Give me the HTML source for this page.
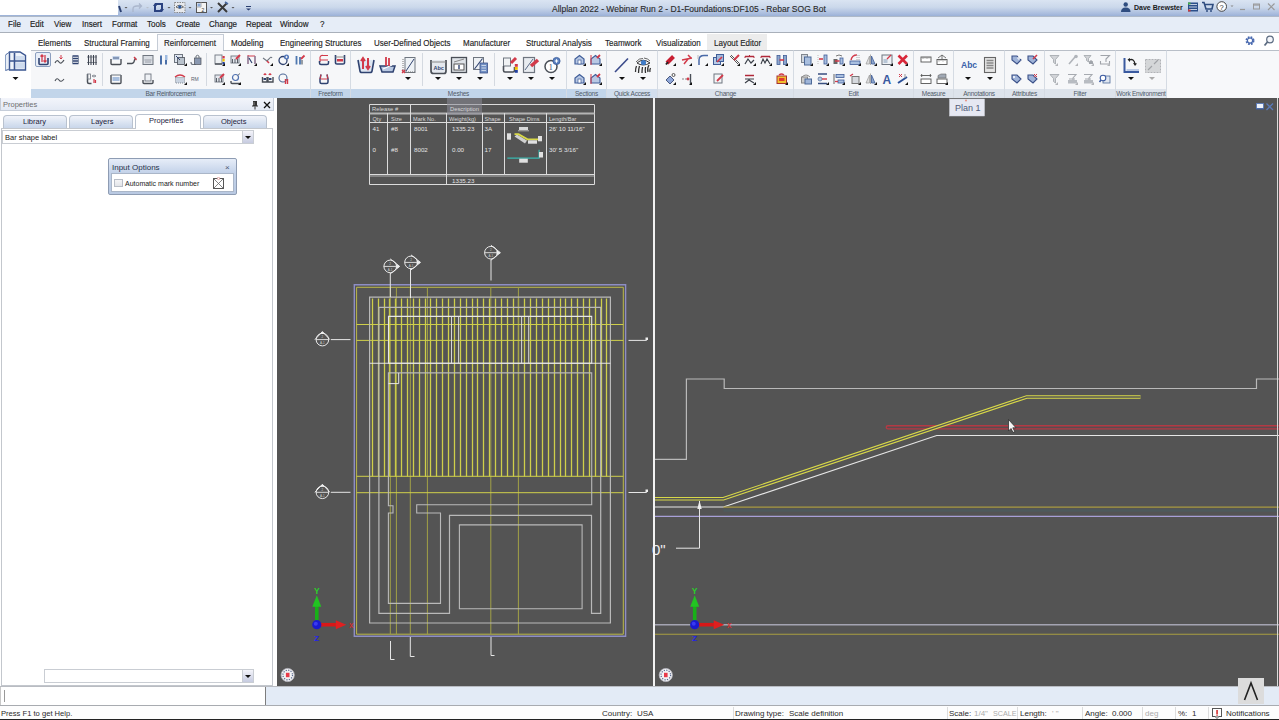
<!DOCTYPE html>
<html><head><meta charset="utf-8">
<style>
*{box-sizing:border-box}
html,body{margin:0;padding:0}
body{width:1279px;height:720px;overflow:hidden;position:relative;background:#fff;font-family:"Liberation Sans",sans-serif;color:#1e1e1e}
.a{position:absolute}
.t{position:absolute;white-space:nowrap;line-height:1}
#title{left:0;top:0;width:1279px;height:16px;background:linear-gradient(#dae4f2 0%,#cbd8eb 45%,#aabdde 85%,#9bb1d7 100%)}
#menu{left:0;top:16px;width:1279px;height:17px;background:#e6edf7;border-top:1px solid #aeb9c8;border-bottom:1px solid #a9b0ba}
#menu .t{top:4px;font-size:8px;color:#1c1c1c;-webkit-text-stroke:0.15px #1c1c1c;transform:scaleY(1.08);transform-origin:0 0}
#tabs{left:0;top:33px;width:1279px;height:17px;background:#fff}
#tabs .t{top:5.5px;font-size:8px;color:#222;transform:scaleY(1.12);transform-origin:0 0;-webkit-text-stroke:0.12px #222}
#ribbon{left:0;top:50px;width:1279px;height:48px;background:#fff}
.grp{position:absolute;top:0;height:47.5px;background:#f6f7f9;border-right:1px solid #d5dbe3;border-top:1px solid #b9bfc8}
.glab{position:absolute;left:0;right:0;bottom:0;height:9px;background:#c2d5ea;font-size:6.5px;letter-spacing:-0.25px;color:#505a68;text-align:center;line-height:9.5px;white-space:nowrap}
#left{left:0;top:98px;width:277px;height:588px;background:#fff}
#vp1{left:277px;top:98px;width:376px;height:588px;background:#545454}
#sep{left:653px;top:98px;width:2px;height:588px;background:#f2f2f2}
#vp2{left:655px;top:98px;width:624px;height:588px;background:#545454}
#cmd{left:0;top:686px;width:1279px;height:20px;background:#fff;border-top:1px solid #b9bcc2;border-bottom:1px solid #a8abb0}
#status{left:0;top:706px;width:1279px;height:13px;background:#fdfdfd}
#status .t{top:3.5px;font-size:8px;color:#2a2a2a}
</style></head>
<body>
<!-- TITLE BAR -->
<div id="title" class="a">
  <div class="a" style="left:0;top:0;width:118px;height:15px;background:#fff"></div>
  <div class="t" style="left:552px;top:5px;font-size:8.5px;color:#2a2a2a;-webkit-text-stroke:0.12px #2a2a2a">Allplan 2022 - Webinar Run 2 - D1-Foundations:DF105 - Rebar SOG Bot</div>
  <div class="t" style="left:1134px;top:4px;font-size:7.8px;color:#1a1a1a;font-weight:bold;transform:scaleX(0.9);transform-origin:0 0">Dave Brewster</div>
</div>
<svg class="a" style="left:0;top:0" width="1279" height="16" viewBox="0 0 1279 16" fill="none">
<path d="M119 6 L121 12" stroke="#2a3f70" stroke-width="2"/>
<polygon points="124.5,7 127.5,7 126,8.5" fill="#555"/>
<path d="M133 12 V9 Q133 6 137 6 H141 M139 3.5 L141.5 6 L139 8.5" stroke="#aab6cc" stroke-width="1.3"/>
<polygon points="146,7 149,7 147.5,8.5" fill="#b8c0cc"/>
<path d="M155 6 V11 H162 M162 9 V4 H155" stroke="#2a4280" stroke-width="2"/><polygon points="153,6 157,6 155,3" fill="#2a4280"/><polygon points="160,9 164,9 162,12" fill="#2a4280"/>
<polygon points="167.5,7 170.5,7 169,8.5" fill="#555"/>
<rect x="174.5" y="2.5" width="10.5" height="10" fill="#e8eaee" stroke="#888" stroke-dasharray="1.5 1"/><path d="M176 7 Q179.5 3.5 183.5 7 Q179.5 10 176 7Z" fill="#fff" stroke="#333" stroke-width="0.7"/><circle cx="179.8" cy="6.8" r="1.6" fill="#2c5aa0"/>
<polygon points="188.5,7 191.5,7 190,8.5" fill="#555"/>
<rect x="196.5" y="2.5" width="10" height="10" fill="#f4f4f4" stroke="#555"/><path d="M196.5 7 H201 V2.5" stroke="#aaa"/><rect x="197.5" y="3.5" width="3" height="3" fill="#88a8d8"/><text x="201.5" y="11.5" font-size="5" fill="#333" font-family="Liberation Sans">2</text>
<polygon points="210,7 213,7 211.5,8.5" fill="#555"/>
<path d="M218 3 L227 12 M227 3 L218 12" stroke="#3a3a3a" stroke-width="2"/><path d="M225 2 L228 4" stroke="#4a6aa0" stroke-width="1.6"/>
<polygon points="231.5,7 234.5,7 233,8.5" fill="#555"/>
<path d="M246 6.5 H251" stroke="#2a3f70" stroke-width="1"/><polygon points="246,8.5 251,8.5 248.5,10.5" fill="#2a3f70"/>
<!-- right side -->
<circle cx="1125.7" cy="4.5" r="2.2" fill="#2f4d80"/><path d="M1121 12 Q1121 7.5 1125.7 7.5 Q1130.5 7.5 1130.5 12 Z" fill="#2f4d80"/>
<rect x="1188" y="2.5" width="10" height="9" fill="#2b4f8a"/><path d="M1189 4.5 H1197 M1189 7 H1197 M1189 9.5 H1197" stroke="#e8eef8" stroke-width="0.8"/><rect x="1188" y="2.5" width="2.5" height="2" fill="#4ab04a"/><rect x="1188" y="9.5" width="2.5" height="2" fill="#c83a3a"/>
<path d="M1202 2.5 H1204 L1206 9 H1212 L1213 4.5 H1205" stroke="#2f4d80" stroke-width="1.6"/><circle cx="1207" cy="11" r="1" fill="#2f4d80"/><circle cx="1211" cy="11" r="1" fill="#2f4d80"/>
<circle cx="1221.7" cy="6.5" r="4.8" fill="#fff" stroke="#333" stroke-width="0.9"/><text x="1219.4" y="9.5" font-size="7.5" fill="#333" font-family="Liberation Sans">?</text>
<polygon points="1230.5,5.5 1233.5,5.5 1232,7" fill="#888"/>
<path d="M1240 9.5 H1245" stroke="#999" stroke-width="1.2"/>
<rect x="1253.5" y="4" width="6" height="5" stroke="#999" stroke-width="1"/><path d="M1253.5 5 H1259.5" stroke="#999" stroke-width="1.2"/>
<path d="M1268 3.5 L1274.5 10 M1274.5 3.5 L1268 10" stroke="#999" stroke-width="1.1"/>
</svg>
<!-- MENU -->
<div id="menu" class="a">
  <div class="t" style="left:8px">File</div>
  <div class="t" style="left:30px">Edit</div>
  <div class="t" style="left:54px">View</div>
  <div class="t" style="left:82px">Insert</div>
  <div class="t" style="left:112px">Format</div>
  <div class="t" style="left:147px">Tools</div>
  <div class="t" style="left:176px">Create</div>
  <div class="t" style="left:209px">Change</div>
  <div class="t" style="left:246px">Repeat</div>
  <div class="t" style="left:280px">Window</div>
  <div class="t" style="left:320px">?</div>
</div>
<!-- TABS -->
<div id="tabs" class="a">
  <div class="a" style="left:157px;top:1px;width:67px;height:17px;background:linear-gradient(#fbfbfd,#f5f6f9);border:1px solid #c5ccd6;border-bottom:none"></div>
  <div class="a" style="left:707px;top:1px;width:60px;height:16px;background:#ececec"></div>
  <div class="t" style="left:38px">Elements</div>
  <div class="t" style="left:84px">Structural Framing</div>
  <div class="t" style="left:164px">Reinforcement</div>
  <div class="t" style="left:231px">Modeling</div>
  <div class="t" style="left:280px">Engineering Structures</div>
  <div class="t" style="left:374px">User-Defined Objects</div>
  <div class="t" style="left:463px">Manufacturer</div>
  <div class="t" style="left:526px">Structural Analysis</div>
  <div class="t" style="left:605px">Teamwork</div>
  <div class="t" style="left:656px">Visualization</div>
  <div class="t" style="left:714px">Layout Editor</div>
</div>
<svg class="a" style="left:1240px;top:33px" width="39" height="17" viewBox="1240 33 39 17" fill="none">
<circle cx="1250" cy="40.6" r="3.4" stroke="#4a6ab0" stroke-width="2.2" stroke-dasharray="1.6 1.1"/><circle cx="1250" cy="40.6" r="2.6" stroke="#4a6ab0" stroke-width="1.2"/><circle cx="1250" cy="40.6" r="1" fill="#fff"/>
<circle cx="1270" cy="39.5" r="3.3" stroke="#5a6a80" stroke-width="1.2" fill="#f4f6fa"/><path d="M1267.5 42 L1264.5 45.5" stroke="#5a6a80" stroke-width="1.8"/>
</svg>
<!-- RIBBON -->
<div id="ribbon" class="a">
  <div class="grp" style="left:0;width:31px;background:#fff;border-right:none;border-top:none"></div>
  <div class="grp" style="left:31px;width:280px"><div class="glab">Bar Reinforcement</div></div>
  <div class="grp" style="left:311px;width:40px"><div class="glab">Freeform</div></div>
  <div class="grp" style="left:351px;width:216px"><div class="glab">Meshes</div></div>
  <div class="grp" style="left:567px;width:40px"><div class="glab">Sections</div></div>
  <div class="grp" style="left:607px;width:51px"><div class="glab" style="background:#d2deed">Quick Access</div></div>
  <div class="grp" style="left:658px;width:136px"><div class="glab" style="background:#dce3ec">Change</div></div>
  <div class="grp" style="left:794px;width:120px"><div class="glab" style="background:#dde3eb">Edit</div></div>
  <div class="grp" style="left:914px;width:40px"><div class="glab" style="background:#dde3eb">Measure</div></div>
  <div class="grp" style="left:954px;width:51px"><div class="glab" style="background:#dde3eb">Annotations</div></div>
  <div class="grp" style="left:1005px;width:40px"><div class="glab" style="background:#dde3eb">Attributes</div></div>
  <div class="grp" style="left:1045px;width:71px"><div class="glab" style="background:#dde3eb">Filter</div></div>
  <div class="grp" style="left:1116px;width:51px"><div class="glab" style="background:#dde3eb">Work Environment</div></div>
  <div class="grp" style="left:1167px;width:112px;background:#f7f8fa;border-right:none"></div>
</div>
<div id="tabcover" class="a" style="left:158px;top:50px;width:65px;height:1px;background:#f6f7f9"></div>
<!--ICONS--><svg class="a" style="left:0;top:0" width="1279" height="98" viewBox="0 0 1279 98" fill="none"><path d="M102.5 53 V86" stroke="#d4d9e0" stroke-width="1"/>
<path d="M206.5 53 V86" stroke="#d4d9e0" stroke-width="1"/>
<path d="M422.5 53 V86" stroke="#d4d9e0" stroke-width="1"/>
<path d="M494.5 53 V86" stroke="#d4d9e0" stroke-width="1"/>
<g><path d="M5.5 55 L9.5 52 V69 L5.5 70.5 Z" fill="#e8eef6" stroke="#8aa0c4" stroke-width="1"/><path d="M9.5 52 H20 L25.5 55.5 V70 H9.5 Z" fill="#eef3fa" stroke="#3a5590" stroke-width="1.4"/><path d="M9.5 61 H25.5 M14.5 53 V70" stroke="#3a5590" stroke-width="1.6"/><path d="M9.5 52 L5.5 55 M9.5 69 L5.5 70.5" stroke="#6a82b0" stroke-width="1"/><rect x="16" y="56" width="8" height="4" fill="#cfdcee"/><rect x="16" y="62.5" width="8" height="6" fill="#cfdcee"/></g>
<polygon points="12.5,77.0 18.5,77.0 15.5,80.0" fill="#111"/>
<rect x="35.5" y="52.5" width="15" height="14" rx="1.5" fill="#e8eef8" stroke="#8c9fbf" stroke-width="1"/>
<g transform="translate(37.5,54)"><path d="M1.5 4 V9.5 Q1.5 10.5 2.5 10.5 H9.5 Q10.5 10.5 10.5 9.5 V4" fill="none" stroke="#2f4270" stroke-width="1.6"/><path d="M4.5 8 V1 M3 2.5 L4.5 1 L6 2.5 M7.5 1 V8 M6 6.5 L7.5 8 L9 6.5" fill="none" stroke="#d23a4a" stroke-width="1.3"/></g>
<g transform="translate(54,54)"><path d="M1 9 Q3 5 5 8 T10 6" fill="none" stroke="#4a4f57" stroke-width="1.2"/><path d="M7 1 V5 M5.5 3.5 L7 5 L8.5 3.5" fill="none" stroke="#d23a4a" stroke-width="1"/></g>
<g transform="translate(70,54)"><path d="M2.5 2 H8.5 M2.5 4.5 H8.5 M2.5 7 H8.5 M2.5 9.5 H8.5" stroke="#2f4270" stroke-width="1.5"/><path d="M2.5 2 V9.5 M8.5 2 V9.5" stroke="#7d8aa0" stroke-width="0.9"/></g>
<g transform="translate(86,54)"><path d="M1 3 H11 M1 8.5 H11" stroke="#6f7680" stroke-width="0.8"/><path d="M2.5 1 V11 M5 1 V11 M7.5 1 V11 M10 1 V11" stroke="#3d4350" stroke-width="1.1"/></g>
<g transform="translate(54,73)"><path d="M1 8 Q3 4 5 7 T10 6" fill="none" stroke="#4a4f57" stroke-width="1.1"/></g>
<g transform="translate(86,73)"><path d="M1.5 1 V9 Q1.5 10.5 3 10.5 H5.5" fill="none" stroke="#4a4f57" stroke-width="1.5"/><rect x="1.5" y="1" width="3" height="5" fill="none" stroke="#6f7680" stroke-width="0.8"/><path d="M6 3 Q8 1 10 3 Q8 5 6 3" fill="none" stroke="#6f7680" stroke-width="0.8"/><path d="M8 6 V10 M9.5 7 V10" stroke="#d23a4a" stroke-width="1.2"/></g>
<g transform="translate(110,54)"><path d="M1 5 V9.5 Q1 10.5 2 10.5 H10 Q11 10.5 11 9.5 V5" fill="none" stroke="#4a4f57" stroke-width="1.4"/><rect x="2.5" y="2" width="7" height="4" fill="#a8bfdf" opacity="0.7"/><path d="M3 4 H9" stroke="#2f4270" stroke-width="0.8"/></g>
<g transform="translate(126,54)"><path d="M1 9.5 H6 Q8 9.5 8.5 6 L10 4" fill="none" stroke="#4a4f57" stroke-width="1.4"/><path d="M8 3 L10.5 6" stroke="#d23a4a" stroke-width="1.3"/></g>
<g transform="translate(142,54)"><rect x="1" y="1.5" width="10" height="9" fill="#d9dde3" stroke="#6f7680" stroke-width="1"/><path d="M2.5 6 H9.5 M3 8 H9" stroke="#8a9099" stroke-width="0.8"/></g>
<g transform="translate(158,54)"><path d="M3 1.5 V10.5 M8 1.5 V10.5" stroke="#4a6fa8" stroke-width="2"/><rect x="7" y="1" width="2.5" height="5" fill="#9fbbe0"/></g>
<g transform="translate(174,54)"><rect x="0.5" y="0.5" width="8" height="8" fill="#dfe6f0" stroke="#6f7680"/><rect x="3.5" y="3.5" width="7" height="7" fill="#b9c2cc" stroke="#4a4f57" stroke-width="0.8"/><path d="M2 2 L6 6" stroke="#2f4270"/></g>
<g transform="translate(190,54)"><path d="M1 8 Q1 10.5 3 10.5 H6" fill="none" stroke="#6f7680" stroke-width="1.2"/><rect x="4.5" y="4" width="6.5" height="6.5" fill="#8a98b0" stroke="#4a4f57" stroke-width="0.7"/><path d="M6 4 V2 Q7.5 0.5 9 2 V4" fill="none" stroke="#6f7680"/></g>
<g transform="translate(110,73)"><path d="M1 2 V9.5 Q1 10.5 2 10.5 H10 Q11 10.5 11 9.5 V2" fill="none" stroke="#4a4f57" stroke-width="1.4"/><path d="M1 2 H11" stroke="#6f7680"/><rect x="2.5" y="4" width="7" height="4" fill="#a8bfdf"/></g>
<g transform="translate(142,73)"><path d="M1 7 V9.5 Q1 10.5 2 10.5 H10 Q11 10.5 11 9.5 V7" fill="none" stroke="#4a4f57" stroke-width="1.4"/><rect x="3" y="1" width="6" height="7" fill="#eef1f5" stroke="#6f7680" stroke-width="0.9"/></g>
<g transform="translate(174,73)"><path d="M1 4 Q6 0 11 4" fill="none" stroke="#d23a4a" stroke-width="1.3"/><rect x="1.5" y="4.5" width="9" height="5.5" fill="#c9d3e0" stroke="#6f7680" stroke-width="0.8" stroke-dasharray="1 1"/></g>
<g transform="translate(190,73)"><text x="1" y="8" font-size="5" fill="#5a6070" font-family="Liberation Sans">RM</text></g>
<g transform="translate(214,54)"><rect x="1" y="1" width="7" height="9" fill="#eef1f4" stroke="#6f7680" stroke-width="0.9"/><path d="M1 10 H8" stroke="#4a4f57" stroke-width="1.4"/><rect x="8.5" y="2" width="2.2" height="2.5" fill="#d23a4a"/><rect x="8.5" y="5" width="2.2" height="2.5" fill="#f2c200"/><rect x="8.5" y="8" width="2.2" height="2.5" fill="#2240a0"/></g>
<g transform="translate(230,54)"><rect x="1" y="2" width="8" height="7" fill="#e4e8ee" stroke="#6f7680" stroke-width="0.9"/><path d="M2.5 5 V9 M5 5 V9 M7.5 5 V9" stroke="#4a4f57" stroke-width="0.9"/><path d="M6 5 L10 1" stroke="#d23a4a" stroke-width="2"/></g>
<g transform="translate(246,54)"><path d="M2 1 V10 M2 2 H9 M9 2 V10" stroke="#d23a4a" stroke-width="1"/><path d="M2 2 V10 M9 2 V10" stroke="#7a8aa8" stroke-width="1.2"/><path d="M3 4 L6 9" stroke="#2f4270" stroke-width="1.2"/></g>
<g transform="translate(262,54)"><path d="M1 4 L5 7 L7 5 Q9 2 10 4" fill="none" stroke="#6f7680" stroke-width="1.1"/><path d="M5 7 L7 9" stroke="#d23a4a" stroke-width="1.6"/></g>
<g transform="translate(278,54)"><circle cx="5" cy="6.5" r="4" fill="none" stroke="#2f4270" stroke-width="1.3"/><circle cx="8.5" cy="3" r="2.5" fill="#4f74b8"/><path d="M7.3 3 H9.7 M8.5 1.8 V4.2" stroke="#fff" stroke-width="0.8"/></g>
<g transform="translate(294,54)"><path d="M2.5 2 V10.5 M6 3 V10.5" stroke="#4f78b0" stroke-width="1.8"/><path d="M7 5 L10.5 1.5" stroke="#d23a4a" stroke-width="1.8"/><path d="M8 6 V10.5" stroke="#6f7680" stroke-width="1.4"/></g>
<g transform="translate(214,73)"><rect x="1" y="2" width="8" height="7" fill="#e4e8ee" stroke="#6f7680" stroke-width="0.9"/><path d="M2.5 5 V9 M5 5 V9 M7.5 5 V9" stroke="#4a4f57" stroke-width="0.9"/><path d="M6 5 L10 1" stroke="#d23a4a" stroke-width="2"/></g>
<g transform="translate(230,73)"><path d="M1 8 V9.5 Q1 10.5 2 10.5 H10" fill="none" stroke="#4a4f57" stroke-width="1.4"/><circle cx="5.5" cy="4.5" r="3" fill="none" stroke="#4f70b0" stroke-width="1.2"/><path d="M7.5 2.5 L10 0.5" stroke="#6f7680"/></g>
<g transform="translate(262,73)"><path d="M0.5 4 V9 H5 V4 M6 4 V9 H11 V4" fill="none" stroke="#4a4f57" stroke-width="1.4"/><rect x="1.5" y="5" width="2.5" height="2" fill="#2f4270"/><rect x="7" y="5" width="2.5" height="2" fill="#2f4270"/><path d="M2 2 Q3 0 4 2 M7 2 Q8 0 9 2" fill="none" stroke="#d23a4a" stroke-width="1.5"/></g>
<g transform="translate(278,73)"><circle cx="5" cy="5" r="4" fill="none" stroke="#4f6a98" stroke-width="1.1"/><path d="M7.5 6 V11 M9.5 6 V11" stroke="#d23a4a" stroke-width="1.4"/></g>
<g transform="translate(318,54)"><path d="M2 3 Q3 1 5 1.5 H10 M2 3 V8 M2 6 H10" fill="none" stroke="#d23a4a" stroke-width="1.1"/><path d="M1.5 7 V9 Q1.5 10.5 3 10.5 H9 Q10.5 10.5 10.5 9 V7" fill="none" stroke="#2f4270" stroke-width="1.5"/></g>
<g transform="translate(334,54)"><path d="M1.5 1 V9 Q1.5 10 3 10 H9 Q10.5 10 10.5 9 V1" fill="none" stroke="#2f4270" stroke-width="1.6"/><rect x="3" y="5" width="6" height="2.5" fill="#d23a4a"/><path d="M1.5 3 H10.5" stroke="#888"/></g>
<g transform="translate(318,73)"><path d="M3 1.5 L2 6 V9 Q2 10.5 3.5 10.5 H8.5 Q10 10.5 10 9 V6 L9 1.5" fill="none" stroke="#2f4270" stroke-width="1.5"/><path d="M3 1.5 L2 6 M9 1.5 L10 6 M3 6 H9" stroke="#d23a4a" stroke-width="1"/></g>
<g transform="translate(574,54)"><path d="M1 10 V5 L5.5 1.5 L10 5 V10 Z" fill="#b8c8e4" stroke="#3f5d98" stroke-width="1.2"/><rect x="4" y="6" width="3" height="4" fill="#fff" stroke="#3f5d98" stroke-width="0.7"/></g>
<g transform="translate(590,54)"><path d="M1 10 V5 L5.5 1.5 L10 5 V10 Z" fill="#b8c8e4" stroke="#3f5d98" stroke-width="1.1"/><path d="M1 1 V11" stroke="#d23a4a" stroke-width="1"/><path d="M7 4 L10 1" stroke="#d23a4a" stroke-width="1.8"/></g>
<g transform="translate(574,73)"><path d="M1 10 V5 L5.5 1.5 L10 5 V10 Z" fill="#b8c8e4" stroke="#3f5d98" stroke-width="1.2"/><rect x="4" y="6" width="3" height="4" fill="#fff" stroke="#3f5d98" stroke-width="0.7"/></g>
<g transform="translate(590,73)"><path d="M1 10 V5 L5.5 1.5 L10 5 V10 Z" fill="#b8c8e4" stroke="#3f5d98" stroke-width="1.1"/><path d="M1 1 V11" stroke="#d23a4a" stroke-width="1"/><path d="M7 4 L10 1" stroke="#d23a4a" stroke-width="1.8"/></g>
<g transform="translate(665,54)"><path d="M2 9 L8.5 2.5" stroke="#c81e32" stroke-width="4"/><path d="M1 10.5 L3 8" stroke="#222" stroke-width="2"/></g>
<g transform="translate(681,54)"><path d="M1 6 L11 4 M3 10 L7 5 M7 1 L10 4" stroke="#d23a4a" stroke-width="1.5"/></g>
<g transform="translate(697,54)"><path d="M2 11 V6 Q2 1.5 7 1.5 H11" fill="none" stroke="#4a6aa8" stroke-width="1.5"/><path d="M1 1 V5" stroke="#bbb"/></g>
<g transform="translate(713,54)"><rect x="0.5" y="3.5" width="7" height="7" fill="#b9cce8" stroke="#3f5d98"/><rect x="3.5" y="0.5" width="7" height="7" fill="#9fb7dc" stroke="#3f5d98"/><path d="M4 8 L9 3" stroke="#d23a4a" stroke-width="1.6"/></g>
<g transform="translate(729,54)"><path d="M1 2 L9 10 M2 1 L10 9" stroke="#555" stroke-width="1"/><path d="M5 6 L10 1" stroke="#d23a4a" stroke-width="2"/></g>
<g transform="translate(744,54)"><path d="M1 2.5 H10" stroke="#b0283a" stroke-width="1.5"/><path d="M1 2.5 V4 M10 2.5 V4 M5.5 1 V3" stroke="#b0283a" stroke-width="1"/><path d="M1 10 L4 5 L7 9 L10 6" fill="none" stroke="#3a3f48" stroke-width="1.2"/></g>
<g transform="translate(760,54)"><path d="M1 2.5 H10" stroke="#b0283a" stroke-width="1.5"/><path d="M1 2.5 V4 M10 2.5 V4" stroke="#b0283a" stroke-width="1"/><path d="M1 10 L3 5 L5 9 L7 5 L10 10" fill="none" stroke="#3a3f48" stroke-width="1.1"/></g>
<g transform="translate(776,54)"><rect x="1" y="1.5" width="3" height="9" fill="#8ea6cc" stroke="#3f5d98" stroke-width="0.8"/><rect x="7.5" y="1.5" width="3" height="9" fill="#8ea6cc" stroke="#3f5d98" stroke-width="0.8"/><path d="M3.5 6 H8" stroke="#d23a4a" stroke-width="1.6"/></g>
<g transform="translate(665,73)"><path d="M1 7 L5 3 L9 7 L5 11 Z" fill="#8ea6d8" stroke="#4a5a80" stroke-width="1"/><circle cx="8.5" cy="2" r="1.5" fill="none" stroke="#555"/></g>
<g transform="translate(681,73)"><path d="M1 6 H7" stroke="#888" stroke-width="1.2" stroke-dasharray="2 1"/><circle cx="7" cy="6" r="1.4" fill="#d23a4a"/><path d="M9.5 1 V11" stroke="#4a4f57" stroke-width="1.4"/></g>
<g transform="translate(713,73)"><rect x="1" y="1" width="8" height="9" fill="#f4f6f8" stroke="#6f7680"/><path d="M4 8 L10 2" stroke="#d23a4a" stroke-width="1.8"/></g>
<g transform="translate(744,73)"><path d="M1 2.5 H10" stroke="#b0283a" stroke-width="1.5"/><path d="M1 6 H10 M1 10 L5 7 L10 10" fill="none" stroke="#3a3f48" stroke-width="1.1"/></g>
<g transform="translate(776,73)"><rect x="1" y="3" width="9.5" height="7.5" fill="#f0c030" stroke="#a83030" stroke-width="1"/><rect x="3" y="5" width="5.5" height="3" fill="#e03a30"/><path d="M3 2 Q5.5 0 8 2" stroke="#d23a4a" fill="none" stroke-width="1.4"/></g>
<g transform="translate(801,54)"><rect x="0.5" y="0.5" width="6" height="8" fill="#d0d6de" stroke="#80868e"/><rect x="3.5" y="3" width="6.5" height="8" fill="#a9bfdf" stroke="#4e6a98"/></g>
<g transform="translate(817,54)"><path d="M1 1 V10" stroke="#bbb" stroke-dasharray="1 1"/><rect x="7" y="1" width="3" height="9" fill="#a9bfdf" stroke="#3f5d98" stroke-width="0.8"/><path d="M2 5 H6" stroke="#d23a4a" stroke-width="1.6"/></g>
<g transform="translate(833,54)"><path d="M3 2 Q6 0 9 2" fill="none" stroke="#777"/><rect x="0.5" y="5" width="4" height="5" fill="#666"/><rect x="7" y="4" width="3" height="6" fill="#a9bfdf" stroke="#3f5d98" stroke-width="0.8"/><path d="M2 7 H6.5" stroke="#d23a4a" stroke-width="1.5"/></g>
<g transform="translate(849,54)"><path d="M2 6 Q3 1 8 1" fill="none" stroke="#d23a4a" stroke-width="1.4"/><rect x="1" y="7" width="10" height="3.5" fill="#a9bfdf" stroke="#3f5d98" stroke-width="0.8"/><path d="M8 1 V6 M10 1 V6" stroke="#aaa" stroke-dasharray="1 1"/></g>
<g transform="translate(865,54)"><path d="M5.5 0.5 V11" stroke="#aaa"/><path d="M1 10 L4.5 2 V10 Z" fill="#ddd" stroke="#999" stroke-width="0.7"/><path d="M6.5 10 V2 L10 10 Z" fill="#8ea6cc" stroke="#3f5d98" stroke-width="0.8"/></g>
<g transform="translate(881,54)"><rect x="1" y="1" width="10" height="9.5" fill="#eef1f5" stroke="#6f7680"/><rect x="2.5" y="5" width="4" height="4" fill="#b8c6d6"/><path d="M6 5 L10 1" stroke="#d23a4a" stroke-width="1.2"/></g>
<g transform="translate(897,54)"><path d="M1.5 1.5 L10 10 M10 1.5 L1.5 10" stroke="#d8283a" stroke-width="2.6"/></g>
<g transform="translate(801,73)"><path d="M1 4 Q5 0 9 4" fill="none" stroke="#888"/><rect x="0.5" y="4" width="6" height="6" fill="#ccc" stroke="#888"/><rect x="4" y="6" width="6.5" height="5" fill="#9fb5d8" stroke="#4e6a98"/></g>
<g transform="translate(817,73)"><path d="M1 1 H10 M1 10.5 H10" stroke="#3a4f80" stroke-width="1.4"/><circle cx="3" cy="6" r="2" fill="#b8c8e0" stroke="#4e6a98" stroke-width="0.7"/><path d="M5 6 H10" stroke="#d23a4a" stroke-width="1.4"/></g>
<g transform="translate(833,73)"><path d="M1 1 V11" stroke="#666"/><rect x="3" y="1.5" width="8" height="3" fill="#a9bfdf" stroke="#3f5d98" stroke-width="0.8"/><rect x="5" y="7" width="6" height="3" fill="#a9bfdf" stroke="#3f5d98" stroke-width="0.8"/><path d="M2 8.5 H5" stroke="#d23a4a" stroke-width="1.3"/></g>
<g transform="translate(849,73)"><path d="M1 3 L4 1" stroke="#d23a4a" stroke-width="1.3"/><rect x="3" y="3.5" width="7" height="7" fill="#d6d9de" stroke="#777"/></g>
<g transform="translate(865,73)"><path d="M5.5 0.5 V11" stroke="#aaa"/><path d="M1 10 L4.5 2 V10 Z" fill="#ddd" stroke="#999" stroke-width="0.7"/><path d="M6.5 10 V2 L10 10 Z" fill="#8ea6cc" stroke="#3f5d98" stroke-width="0.8"/></g>
<g transform="translate(881,73)"><text x="1.5" y="10.5" font-size="12" font-weight="bold" fill="#3a5aa0" font-family="Liberation Sans">A</text></g>
<g transform="translate(897,73)"><path d="M1 10 L10 4" stroke="#2a4f98" stroke-width="2"/><path d="M2 1 L5 4 M5 1 L2 4" stroke="#d23a4a" stroke-width="1"/><path d="M8 1 V5" stroke="#999"/></g>
<g transform="translate(920,54)"><rect x="1" y="3" width="10" height="5" fill="#fff" stroke="#555" stroke-width="0.9"/><path d="M3 3 V5 M5 3 V4.5 M7 3 V5 M9 3 V4.5" stroke="#555" stroke-width="0.6"/></g>
<g transform="translate(936,54)"><rect x="1" y="5.5" width="10" height="5" fill="#fff" stroke="#555" stroke-width="0.9"/><path d="M3 5.5 V7.5 M5 5.5 V7 M7 5.5 V7.5 M9 5.5 V7" stroke="#555" stroke-width="0.6"/><path d="M2 4 L6 1 L10 4 M6 1 V5" fill="none" stroke="#555" stroke-width="0.8"/></g>
<g transform="translate(920,73)"><rect x="1" y="6" width="10" height="4.5" fill="#fff" stroke="#555" stroke-width="0.9"/><path d="M1 2.5 H11 M2 1 L1 2.5 L2 4 M10 1 L11 2.5 L10 4" fill="none" stroke="#555" stroke-width="0.9"/></g>
<g transform="translate(936,73)"><rect x="1" y="6" width="10" height="4.5" fill="#fff" stroke="#555" stroke-width="0.9"/><path d="M2 5 V2.5 L5 1 H10 V5 Z" fill="#a0a8b4" stroke="#666" stroke-width="0.6"/></g>
<g transform="translate(1011,54)"><path d="M1 2 H6 L10 6 L6 10 L1 6 Z" fill="#9fb3d8" stroke="#3a5088" stroke-width="1.1"/><path d="M6 4 H10 M8 2 V6" stroke="#fff" stroke-width="1"/></g>
<g transform="translate(1027,54)"><path d="M1 2 H6 L10 6 L6 10 L1 6 Z" fill="#9fb3d8" stroke="#3a5088" stroke-width="1.1"/><path d="M6 5 L10 1" stroke="#d23a4a" stroke-width="1.6"/></g>
<g transform="translate(1011,73)"><path d="M1 2 H6 L10 6 L6 10 L1 6 Z" fill="#9fb3d8" stroke="#3a5088" stroke-width="1.1"/><circle cx="3" cy="4" r="1" fill="#fff"/></g>
<g transform="translate(1027,73)"><path d="M1 2 H6 L10 6 L6 10 L1 6 Z" fill="#9fb3d8" stroke="#3a5088" stroke-width="1.1"/><path d="M7 1 L10 4 M10 1 L7 4" stroke="#d23a4a" stroke-width="1"/></g>
<g transform="translate(1049,54)"><path d="M1 1.5 H10 L6.5 5.5 V10 L4.5 8.5 V5.5 Z" fill="#d2d4d8" stroke="#a0a4aa" stroke-width="0.8"/></g>
<g transform="translate(1067,54)"><path d="M2 10 L8 3" stroke="#b0b4ba" stroke-width="1.6"/><circle cx="9" cy="2.5" r="1.8" fill="#b0b4ba"/></g>
<g transform="translate(1083,54)"><path d="M1 1.5 H8 L5.5 4.5 V8 L3.5 6.5 V4.5 Z" fill="#d2d4d8" stroke="#a0a4aa" stroke-width="0.8"/><path d="M6 10 V7.5 L8 6 L10 7.5 V10 Z" fill="#a0a4aa"/></g>
<g transform="translate(1099,54)"><path d="M1.5 1.5 H10.5 L7 5 V8 M1.5 7 V10 H10.5 V7" fill="none" stroke="#a0a4aa" stroke-width="1.1"/></g>
<g transform="translate(1049,73)"><path d="M1 1.5 H10 L6.5 5.5 V10 L4.5 8.5 V5.5 Z" fill="#d2d4d8" stroke="#a0a4aa" stroke-width="0.8"/></g>
<g transform="translate(1067,73)"><path d="M1 1.5 H9 L6 5 V9 H8 M2 6 H8" fill="none" stroke="#a6aab0" stroke-width="1.1"/><rect x="1" y="7" width="9" height="3.5" fill="#b8bcc2"/></g>
<g transform="translate(1083,73)"><path d="M1 1.5 H9 L6 5 V9 H8 M2 6 H8" fill="none" stroke="#a6aab0" stroke-width="1.1"/><rect x="1" y="7" width="9" height="3.5" fill="#b8bcc2"/></g>
<g transform="translate(1099,73)"><rect x="4" y="3" width="7" height="7" fill="#dfe6f0" stroke="#4e6a98" stroke-width="0.8"/><circle cx="4" cy="5" r="2.8" fill="#fff" stroke="#3a5aa0" stroke-width="1.1"/><path d="M2 7 L0.5 9" stroke="#3a5aa0" stroke-width="1.5"/></g>
<polygon points="225,66 222,66 225,63" fill="#111"/>
<polygon points="241,66 238,66 241,63" fill="#111"/>
<polygon points="257,66 254,66 257,63" fill="#111"/>
<polygon points="273,66 270,66 273,63" fill="#111"/>
<polygon points="289,66 286,66 289,63" fill="#111"/>
<polygon points="225,85 222,85 225,82" fill="#111"/>
<polygon points="241,85 238,85 241,82" fill="#111"/>
<polygon points="187,66 184,66 187,63" fill="#111"/>
<polygon points="187,85 184,85 187,82" fill="#111"/>
<polygon points="586,66 583,66 586,63" fill="#111"/>
<polygon points="602,66 599,66 602,63" fill="#111"/>
<polygon points="586,85 583,85 586,82" fill="#111"/>
<polygon points="602,85 599,85 602,82" fill="#111"/>
<polygon points="676,66 673,66 676,63" fill="#111"/>
<polygon points="692,66 689,66 692,63" fill="#111"/>
<polygon points="708,66 705,66 708,63" fill="#111"/>
<polygon points="724,66 721,66 724,63" fill="#111"/>
<polygon points="740,66 737,66 740,63" fill="#111"/>
<polygon points="756,66 753,66 756,63" fill="#111"/>
<polygon points="772,66 769,66 772,63" fill="#111"/>
<polygon points="788,66 785,66 788,63" fill="#111"/>
<polygon points="676,85 673,85 676,82" fill="#111"/>
<polygon points="692,85 689,85 692,82" fill="#111"/>
<polygon points="756,85 753,85 756,82" fill="#111"/>
<polygon points="788,85 785,85 788,82" fill="#111"/>
<polygon points="813,66 810,66 813,63" fill="#111"/>
<polygon points="829,66 826,66 829,63" fill="#111"/>
<polygon points="845,66 842,66 845,63" fill="#111"/>
<polygon points="861,66 858,66 861,63" fill="#111"/>
<polygon points="877,66 874,66 877,63" fill="#111"/>
<polygon points="893,66 890,66 893,63" fill="#111"/>
<polygon points="908,66 905,66 908,63" fill="#111"/>
<polygon points="829,85 826,85 829,82" fill="#111"/>
<polygon points="845,85 842,85 845,82" fill="#111"/>
<polygon points="861,85 858,85 861,82" fill="#111"/>
<polygon points="877,85 874,85 877,82" fill="#111"/>
<polygon points="908,85 905,85 908,82" fill="#111"/>
<polygon points="948,85 945,85 948,82" fill="#111"/>
<polygon points="1058,66 1055,66 1058,63" fill="#b4b6ba"/>
<polygon points="1078,66 1075,66 1078,63" fill="#b4b6ba"/>
<polygon points="1094,66 1091,66 1094,63" fill="#b4b6ba"/>
<polygon points="1110,66 1107,66 1110,63" fill="#b4b6ba"/>
<polygon points="1058,85 1055,85 1058,82" fill="#b4b6ba"/>
<polygon points="1078,85 1075,85 1078,82" fill="#b4b6ba"/>
<polygon points="1094,85 1091,85 1094,82" fill="#b4b6ba"/>
<g transform="translate(357,57)"><path d="M1 3 L3 14 Q3 15.5 5 15.5 H13 Q15 15.5 15 14 L17 3" fill="#dde6f2" stroke="#2f4270" stroke-width="1.6"/><path d="M6 1 V12 M4 4 L6 1 L8 4 M11 1 V12 M9 9 L11 12 L13 9" fill="none" stroke="#d23a4a" stroke-width="2"/></g>
<g transform="translate(379,57)"><path d="M1 9 L3 15 H14 L16 9 Z" fill="#b8c8e2" stroke="#2f4270" stroke-width="1.5"/><path d="M4 12 L13 8" stroke="#fff" stroke-width="1.2"/><path d="M7 0 V9 M10 1 V9" stroke="#d23a4a" stroke-width="1.8"/></g>
<g transform="translate(401,57)"><rect x="4" y="0.5" width="10" height="15" fill="#eef2f6" stroke="#6f7680"/><path d="M5 14 L13 2" stroke="#2f4270" stroke-width="1"/><path d="M2 2 V15 H15" stroke="#777" stroke-dasharray="1 1"/><path d="M1 13 L4 16 M4 13 L1 16" stroke="#d23a4a" stroke-width="1.3"/></g>
<g transform="translate(430,58)"><path d="M1 2 V13 Q1 15.5 3.5 15.5 H14 Q16 15.5 16 13 V2" fill="#e4e8ee" stroke="#4a4f57" stroke-width="1.7"/><path d="M1 4 H16" stroke="#888"/><text x="3.5" y="12" font-size="5.5" fill="#2f4270" font-family="Liberation Sans" font-weight="bold">Abc</text></g>
<g transform="translate(451,57)"><rect x="0.5" y="0.5" width="15" height="15" fill="#dfe3e8" stroke="#4a4f57" stroke-width="1.3"/><rect x="3" y="7" width="10" height="6" fill="#fff" stroke="#555"/><path d="M3 5 L13 2" stroke="#888"/><path d="M8 8 V12" stroke="#2f4270" stroke-width="1.4"/></g>
<g transform="translate(473,57)"><rect x="0.5" y="0.5" width="10" height="12" fill="#eef1f4" stroke="#6f7680"/><path d="M1.5 12 L9.5 1.5" stroke="#2f4270" stroke-width="1.1"/><rect x="7" y="6" width="7.5" height="10" fill="#7290c4" stroke="#3a5088" stroke-width="0.8"/><path d="M8.5 8.5 H13 M8.5 11 H13 M8.5 13.5 H13" stroke="#dfe8f4" stroke-width="0.8"/></g>
<g transform="translate(502,57)"><rect x="1.5" y="1" width="7" height="8" fill="#f0f2f4" stroke="#6f7680"/><path d="M1.5 9 V13.5 Q1.5 15 3 15 H11 Q12.5 15 12.5 13.5 V10" fill="none" stroke="#4a4f57" stroke-width="1.6"/><path d="M9 6 L14 1" stroke="#d23a4a" stroke-width="3"/><rect x="12.8" y="7" width="3" height="2.8" fill="#d23a4a"/><rect x="12.8" y="10" width="3" height="2.8" fill="#f2c200"/><rect x="12.8" y="13" width="3" height="2.8" fill="#2240a0"/></g>
<g transform="translate(523,57)"><rect x="0.5" y="0.5" width="11" height="15" fill="#e8ecf0" stroke="#6f7680" stroke-width="1.2"/><path d="M2 13 L10 2" stroke="#5a6a88" stroke-width="1"/><path d="M8 9 L15 3" stroke="#d23a4a" stroke-width="3.5"/></g>
<g transform="translate(544,57)"><circle cx="7" cy="9.5" r="6" fill="#fff" stroke="#4a4f57" stroke-width="1.5"/><text x="4.8" y="13" font-size="8" fill="#2f4270" font-family="Liberation Serif">1</text><circle cx="12.5" cy="4" r="3.6" fill="#5a80c0" stroke="#3a5a98" stroke-width="0.8"/><path d="M10.8 4 H14.2 M12.5 2.3 V5.7" stroke="#fff" stroke-width="1.1"/></g>
<g transform="translate(614,57)"><path d="M1 15 L14 1.5" stroke="#3a4a8a" stroke-width="1.6"/></g>
<g transform="translate(634,57)"><path d="M2 5 Q5 1 9 1.5 M10 1 Q14 1.5 16 4" stroke="#555" stroke-width="0.9" fill="none"/><path d="M3 6 Q9 0.5 16 6 Q9 10 3 6 Z" fill="#f4f6fa" stroke="#333" stroke-width="1"/><circle cx="9.5" cy="5.5" r="2.6" fill="#3f7cc8"/><path d="M2.5 9 Q1.5 11 1.5 15 M5.5 9 Q4.5 12 4.5 16 M8.5 10 Q8 13 8 16 M11.5 10 Q11 13 11.5 16 M15 8 Q13 11 14 15 M16.5 11 Q15.5 13 16 15" stroke="#333" stroke-width="1.3" fill="none"/></g>
<g transform="translate(961,56)"><text x="0" y="12" font-size="8.5" font-weight="bold" fill="#3a62aa" font-family="Liberation Sans">Abc</text></g>
<g transform="translate(984,57)"><rect x="0.5" y="0.5" width="11" height="15" fill="#e4e4e4" stroke="#666" stroke-width="1.1"/><path d="M2.5 3.5 H9.5 M2.5 6 H9.5 M2.5 8.5 H9.5 M2.5 11 H9.5" stroke="#888" stroke-width="1.3"/></g>
<g transform="translate(1123,57)"><path d="M1.5 1 V15 H16" fill="none" stroke="#3a5aa0" stroke-width="2"/><path d="M3.5 13 H16" stroke="#a8bce0" stroke-width="1.5"/><path d="M6 3 Q11 1 12 7" fill="none" stroke="#222" stroke-width="1.3"/><path d="M4.5 2.5 L7 1 L7 5 Z M10 6 L14 6.5 L12 9 Z" fill="#222"/></g>
<g transform="translate(1145,58)"><rect x="0.5" y="1.5" width="15" height="13" fill="#d4d6d8" stroke="#b0b2b6" stroke-dasharray="2 1"/><path d="M3 12 L7 8 M9 6 L13 2" stroke="#a0a2a6" stroke-width="1.1"/></g>
<polygon points="405,77.0 411,77.0 408,80.0" fill="#111"/>
<polygon points="435,77.0 441,77.0 438,80.0" fill="#111"/>
<polygon points="456,77.0 462,77.0 459,80.0" fill="#111"/>
<polygon points="477,77.0 483,77.0 480,80.0" fill="#111"/>
<polygon points="507,77.0 513,77.0 510,80.0" fill="#111"/>
<polygon points="528,77.0 534,77.0 531,80.0" fill="#111"/>
<polygon points="549,77.0 555,77.0 552,80.0" fill="#111"/>
<polygon points="619,77.0 625,77.0 622,80.0" fill="#111"/>
<polygon points="640,77.0 646,77.0 643,80.0" fill="#111"/>
<polygon points="965,77.0 971,77.0 968,80.0" fill="#111"/>
<polygon points="987,77.0 993,77.0 990,80.0" fill="#111"/>
<polygon points="1128,77.0 1134,77.0 1131,80.0" fill="#111"/>
<polygon points="1149,77.0 1155,77.0 1152,80.0" fill="#aaa"/></svg><!--/ICONS-->
<!-- LEFT PANEL -->
<div id="left" class="a">
  <div class="a" style="left:0;top:0;width:274px;height:13px;background:linear-gradient(#f3f5fb,#e3e9f4);border:1px solid #c5cdd9;border-top:none"></div>
  <div class="t" style="left:3px;top:3px;font-size:7.5px;color:#6e6e6e">Properties</div>
  <svg class="a" style="left:250px;top:2px" width="10" height="10" viewBox="0 0 10 10"><path d="M3 1 H7 V5.5 H8 V6.5 H2 V5.5 H3 Z" fill="#333"/><path d="M4 2 V5" stroke="#aaa" stroke-width="0.7"/><path d="M5 6.5 V9.5" stroke="#333" stroke-width="1"/></svg>
  <svg class="a" style="left:262px;top:2px" width="10" height="10" viewBox="0 0 10 10"><path d="M2 2 L8 8 M8 2 L2 8" stroke="#111" stroke-width="1.3"/></svg>
  <!-- tabs -->
  <div class="a" style="left:3px;top:17px;width:64px;height:13px;border:1px solid #b9c2cf;border-bottom:none;border-radius:4px 4px 0 0;background:linear-gradient(#f1f4fa,#c8d6ea)"></div>
  <div class="a" style="left:69px;top:17px;width:64px;height:13px;border:1px solid #b9c2cf;border-bottom:none;border-radius:4px 4px 0 0;background:linear-gradient(#f1f4fa,#c8d6ea)"></div>
  <div class="a" style="left:135px;top:16px;width:66px;height:15px;border:1px solid #b9c2cf;border-bottom:none;border-radius:4px 4px 0 0;background:#fff"></div>
  <div class="a" style="left:203px;top:17px;width:64px;height:13px;border:1px solid #b9c2cf;border-bottom:none;border-radius:4px 4px 0 0;background:linear-gradient(#f1f4fa,#c8d6ea)"></div>
  <div class="t" style="left:23px;top:20px;font-size:7.5px;color:#1d2340">Library</div>
  <div class="t" style="left:91px;top:20px;font-size:7.5px;color:#1d2340">Layers</div>
  <div class="t" style="left:149px;top:19px;font-size:7.5px;color:#1d2340">Properties</div>
  <div class="t" style="left:221px;top:20px;font-size:7.5px;color:#1d2340">Objects</div>
  <!-- content frame -->
  <div class="a" style="left:1px;top:30px;width:272px;height:558px;border:1px solid #c3c7cd;border-top:1px solid #c3c7cd;background:#fff"></div>
  <div class="a" style="left:136px;top:30px;width:64px;height:1px;background:#fff"></div>
  <!-- dropdown -->
  <div class="a" style="left:2px;top:32px;width:252px;height:14px;border:1px solid #c9cdd3;background:#fff"></div>
  <div class="a" style="left:242px;top:32px;width:12px;height:14px;border:1px solid #c9cdd3;background:linear-gradient(#f4f4fa,#c6cbe0)"></div>
  <div class="a" style="left:245px;top:38px;width:0;height:0;border-left:3px solid transparent;border-right:3px solid transparent;border-top:3px solid #111"></div>
  <div class="t" style="left:5px;top:36px;font-size:7.5px;color:#222">Bar shape label</div>
  <!-- input options -->
  <div class="a" style="left:108px;top:60px;width:129px;height:37px;border:1px solid #8e9cb3;border-radius:2px;background:linear-gradient(#e6edf8,#c3d2e9 40%,#b9c9e2)"></div>
  <div class="a" style="left:111px;top:75px;width:123px;height:19px;background:#fff;border:1px solid #aab6c8"></div>
  <div class="t" style="left:112px;top:66px;font-size:8px;color:#26324a">Input Options</div>
  <div class="t" style="left:225px;top:66px;font-size:8px;color:#4a5670">&#x00D7;</div>
  <div class="a" style="left:114px;top:81px;width:9px;height:8px;border:1px solid #b9bec7;background:linear-gradient(#f4f4f6,#e2e4e8)"></div>
  <div class="t" style="left:125px;top:82px;font-size:7px;color:#222">Automatic mark number</div>
  <svg class="a" style="left:212px;top:79px" width="13" height="12" viewBox="0 0 13 12"><rect x="1.5" y="1.5" width="10" height="10" fill="#fff" stroke="#555" stroke-width="1"/><path d="M1.5 1.5 L11.5 11.5 M11.5 1.5 L1.5 11.5" stroke="#666" stroke-width="0.8"/><circle cx="6.5" cy="1.5" r="1.2" fill="#fff" stroke="#c77" stroke-width="0.6"/></svg>
  <!-- bottom dropdown -->
  <div class="a" style="left:44px;top:571px;width:210px;height:14px;border:1px solid #c9cdd3;background:#fff"></div>
  <div class="a" style="left:242px;top:571px;width:12px;height:14px;border:1px solid #c9cdd3;background:linear-gradient(#f4f4fa,#c6cbe0)"></div>
  <div class="a" style="left:245px;top:577px;width:0;height:0;border-left:3px solid transparent;border-right:3px solid transparent;border-top:3px solid #111"></div>
</div>
<!-- VIEWPORTS -->
<div id="vp1" class="a"></div>
<div id="sep" class="a"></div>
<div id="vp2" class="a"></div>
<!--CAD--><svg id="cad" class="a" style="left:0;top:0" width="1279" height="720" viewBox="0 0 1279 720" font-family="Liberation Sans, sans-serif">
<defs><clipPath id="cvp"><rect x="277" y="98" width="376" height="588"/><rect x="655" y="98" width="624" height="588"/></clipPath></defs>
<g clip-path="url(#cvp)">
<polygon points="369.5,104.5 594.5,104.5 594.5,184.5 369.5,184.5" fill="none" stroke="#dcdcdc" stroke-width="1"/>
<line x1="369.5" y1="113.5" x2="594.5" y2="113.5" stroke="#b4b4b4" stroke-width="2" />
<line x1="369.5" y1="122.5" x2="594.5" y2="122.5" stroke="#dcdcdc" stroke-width="1" />
<line x1="369.5" y1="174.5" x2="594.5" y2="174.5" stroke="#dcdcdc" stroke-width="1" />
<line x1="369.5" y1="176" x2="594.5" y2="176" stroke="#dcdcdc" stroke-width="0.7" />
<line x1="387.5" y1="113" x2="387.5" y2="175" stroke="#dcdcdc" stroke-width="1" />
<line x1="410.5" y1="104.5" x2="410.5" y2="175" stroke="#dcdcdc" stroke-width="1" />
<line x1="446.5" y1="113" x2="446.5" y2="184.5" stroke="#dcdcdc" stroke-width="1" />
<line x1="482.5" y1="113" x2="482.5" y2="175" stroke="#dcdcdc" stroke-width="1" />
<line x1="504.5" y1="113" x2="504.5" y2="175" stroke="#dcdcdc" stroke-width="1" />
<line x1="546.5" y1="113" x2="546.5" y2="175" stroke="#dcdcdc" stroke-width="1" />
<rect x="447" y="98" width="35" height="17" fill="#8a8a95" opacity="0.55"/>
<text x="372" y="111" font-size="5.8" fill="#d8d8d8" text-anchor="start">Release #</text>
<text x="450" y="111" font-size="5.8" fill="#d8d8d8" text-anchor="start">Description</text>
<text x="372.5" y="120.5" font-size="5.6" fill="#d8d8d8" text-anchor="start">Qty</text>
<text x="391" y="120.5" font-size="5.6" fill="#d8d8d8" text-anchor="start">Size</text>
<text x="413" y="120.5" font-size="5.6" fill="#d8d8d8" text-anchor="start">Mark No.</text>
<text x="449" y="120.5" font-size="5.6" fill="#d8d8d8" text-anchor="start">Weight(kg)</text>
<text x="484.5" y="120.5" font-size="5.6" fill="#d8d8d8" text-anchor="start">Shape</text>
<text x="509" y="120.5" font-size="5.6" fill="#d8d8d8" text-anchor="start">Shape Dims</text>
<text x="549" y="120.5" font-size="5.6" fill="#d8d8d8" text-anchor="start">Length/Bar</text>
<text x="372.5" y="130.5" font-size="6.2" fill="#e4e4e4" text-anchor="start">41</text>
<text x="391" y="130.5" font-size="6.2" fill="#e4e4e4" text-anchor="start">#8</text>
<text x="414" y="130.5" font-size="6.2" fill="#e4e4e4" text-anchor="start">8001</text>
<text x="452" y="130.5" font-size="6.2" fill="#e4e4e4" text-anchor="start">1335.23</text>
<text x="484.5" y="130.5" font-size="6.2" fill="#e4e4e4" text-anchor="start">3A</text>
<text x="549" y="130.5" font-size="6.2" fill="#e4e4e4" text-anchor="start">26' 10 11/16"</text>
<text x="372.5" y="152" font-size="6.2" fill="#e4e4e4" text-anchor="start">0</text>
<text x="391" y="152" font-size="6.2" fill="#e4e4e4" text-anchor="start">#8</text>
<text x="414" y="152" font-size="6.2" fill="#e4e4e4" text-anchor="start">8002</text>
<text x="452" y="152" font-size="6.2" fill="#e4e4e4" text-anchor="start">0.00</text>
<text x="484.5" y="152" font-size="6.2" fill="#e4e4e4" text-anchor="start">17</text>
<text x="549" y="152" font-size="6.2" fill="#e4e4e4" text-anchor="start">30' 5 3/16"</text>
<text x="452" y="182.5" font-size="6.2" fill="#e4e4e4" text-anchor="start">1335.23</text>
<rect x="519" y="127" width="9" height="3" fill="#d8d8d8"/>
<path d="M518 130.8 H529" stroke="#cfcfcf" stroke-width="0.8"/>
<rect x="507" y="133.3" width="4" height="6.4" fill="#e0e0e0"/>
<polygon points="514.5,136.5 517,134.5 527,140.5 525,143.5" fill="#d0d0d0"/>
<polyline points="514.5,134.2 518.5,134.2 527.5,139.3 538,139.3" fill="none" stroke="#d8d848" stroke-width="1.8"/>
<rect x="528" y="140.3" width="9" height="3.4" fill="#e0e0e0"/>
<rect x="538" y="136" width="4" height="5.3" fill="#e0e0e0"/>
<polyline points="507.3,158.1 539.1,158.1 539.1,149.8" fill="none" stroke="#38b8b0" stroke-width="1.2"/>
<rect x="539" y="152" width="4" height="5.5" fill="#e0e0e0"/>
<rect x="519.2" y="158.7" width="8.6" height="4" fill="#e0e0e0"/>
<polygon points="354.3,284.8 625.6,284.8 625.6,636.3 354.3,636.3" fill="none" stroke="#8e8ec4" stroke-width="1.4"/>
<polygon points="356.6,287.3 623.3,287.3 623.3,634.2 356.6,634.2" fill="none" stroke="#bcb848" stroke-width="1"/>
<line x1="372.5" y1="298.5" x2="372.5" y2="476.5" stroke="#cfcf4a" stroke-width="1.3" />
<line x1="378.5" y1="298.5" x2="378.5" y2="476.5" stroke="#cfcf4a" stroke-width="1.3" />
<line x1="384.5" y1="298.5" x2="384.5" y2="476.5" stroke="#cfcf4a" stroke-width="1.3" />
<line x1="389.5" y1="298.5" x2="389.5" y2="476.5" stroke="#cfcf4a" stroke-width="1.3" />
<line x1="395.5" y1="298.5" x2="395.5" y2="476.5" stroke="#cfcf4a" stroke-width="1.3" />
<line x1="401.5" y1="298.5" x2="401.5" y2="476.5" stroke="#cfcf4a" stroke-width="1.3" />
<line x1="407.5" y1="298.5" x2="407.5" y2="476.5" stroke="#cfcf4a" stroke-width="1.3" />
<line x1="413.5" y1="298.5" x2="413.5" y2="476.5" stroke="#cfcf4a" stroke-width="1.3" />
<line x1="419.5" y1="298.5" x2="419.5" y2="476.5" stroke="#cfcf4a" stroke-width="1.3" />
<line x1="425.5" y1="298.5" x2="425.5" y2="476.5" stroke="#cfcf4a" stroke-width="1.3" />
<line x1="430.5" y1="298.5" x2="430.5" y2="476.5" stroke="#cfcf4a" stroke-width="1.3" />
<line x1="436.5" y1="298.5" x2="436.5" y2="476.5" stroke="#cfcf4a" stroke-width="1.3" />
<line x1="442.5" y1="298.5" x2="442.5" y2="476.5" stroke="#cfcf4a" stroke-width="1.3" />
<line x1="448.5" y1="298.5" x2="448.5" y2="476.5" stroke="#cfcf4a" stroke-width="1.3" />
<line x1="454.5" y1="298.5" x2="454.5" y2="476.5" stroke="#cfcf4a" stroke-width="1.3" />
<line x1="460.5" y1="298.5" x2="460.5" y2="476.5" stroke="#cfcf4a" stroke-width="1.3" />
<line x1="466.5" y1="298.5" x2="466.5" y2="476.5" stroke="#cfcf4a" stroke-width="1.3" />
<line x1="472.5" y1="298.5" x2="472.5" y2="476.5" stroke="#cfcf4a" stroke-width="1.3" />
<line x1="477.5" y1="298.5" x2="477.5" y2="476.5" stroke="#cfcf4a" stroke-width="1.3" />
<line x1="483.5" y1="298.5" x2="483.5" y2="476.5" stroke="#cfcf4a" stroke-width="1.3" />
<line x1="489.5" y1="298.5" x2="489.5" y2="476.5" stroke="#cfcf4a" stroke-width="1.3" />
<line x1="495.5" y1="298.5" x2="495.5" y2="476.5" stroke="#cfcf4a" stroke-width="1.3" />
<line x1="501.5" y1="298.5" x2="501.5" y2="476.5" stroke="#cfcf4a" stroke-width="1.3" />
<line x1="507.5" y1="298.5" x2="507.5" y2="476.5" stroke="#cfcf4a" stroke-width="1.3" />
<line x1="513.5" y1="298.5" x2="513.5" y2="476.5" stroke="#cfcf4a" stroke-width="1.3" />
<line x1="518.5" y1="298.5" x2="518.5" y2="476.5" stroke="#cfcf4a" stroke-width="1.3" />
<line x1="524.5" y1="298.5" x2="524.5" y2="476.5" stroke="#cfcf4a" stroke-width="1.3" />
<line x1="530.5" y1="298.5" x2="530.5" y2="476.5" stroke="#cfcf4a" stroke-width="1.3" />
<line x1="536.5" y1="298.5" x2="536.5" y2="476.5" stroke="#cfcf4a" stroke-width="1.3" />
<line x1="542.5" y1="298.5" x2="542.5" y2="476.5" stroke="#cfcf4a" stroke-width="1.3" />
<line x1="548.5" y1="298.5" x2="548.5" y2="476.5" stroke="#cfcf4a" stroke-width="1.3" />
<line x1="554.5" y1="298.5" x2="554.5" y2="476.5" stroke="#cfcf4a" stroke-width="1.3" />
<line x1="560.5" y1="298.5" x2="560.5" y2="476.5" stroke="#cfcf4a" stroke-width="1.3" />
<line x1="565.5" y1="298.5" x2="565.5" y2="476.5" stroke="#cfcf4a" stroke-width="1.3" />
<line x1="571.5" y1="298.5" x2="571.5" y2="476.5" stroke="#cfcf4a" stroke-width="1.3" />
<line x1="577.5" y1="298.5" x2="577.5" y2="476.5" stroke="#cfcf4a" stroke-width="1.3" />
<line x1="583.5" y1="298.5" x2="583.5" y2="476.5" stroke="#cfcf4a" stroke-width="1.3" />
<line x1="589.5" y1="298.5" x2="589.5" y2="476.5" stroke="#cfcf4a" stroke-width="1.3" />
<line x1="595.5" y1="298.5" x2="595.5" y2="476.5" stroke="#cfcf4a" stroke-width="1.3" />
<line x1="601.5" y1="298.5" x2="601.5" y2="476.5" stroke="#cfcf4a" stroke-width="1.3" />
<line x1="606.5" y1="298.5" x2="606.5" y2="476.5" stroke="#cfcf4a" stroke-width="1.3" />
<line x1="390.3" y1="287.3" x2="390.3" y2="634.2" stroke="#a2a046" stroke-width="1" />
<line x1="396.4" y1="287.3" x2="396.4" y2="634.2" stroke="#a2a046" stroke-width="1" />
<line x1="410.3" y1="287.3" x2="410.3" y2="634.2" stroke="#a2a046" stroke-width="1" />
<line x1="427.4" y1="287.3" x2="427.4" y2="634.2" stroke="#a2a046" stroke-width="1" />
<line x1="490.8" y1="287.3" x2="490.8" y2="634.2" stroke="#a2a046" stroke-width="1" />
<line x1="518.4" y1="287.3" x2="518.4" y2="634.2" stroke="#a2a046" stroke-width="1" />
<line x1="356.6" y1="324.5" x2="623.3" y2="324.5" stroke="#cfcf4a" stroke-width="1" />
<line x1="356.6" y1="340.4" x2="623.3" y2="340.4" stroke="#cfcf4a" stroke-width="1" />
<line x1="356.6" y1="476.3" x2="623.3" y2="476.3" stroke="#cfcf4a" stroke-width="1" />
<line x1="356.6" y1="492.7" x2="623.3" y2="492.7" stroke="#cfcf4a" stroke-width="1" />
<polygon points="369.6,297.1 610.4,297.1 610.4,623 369.6,623" fill="none" stroke="#b9b9b9" stroke-width="1.2"/>
<polygon points="378.9,307.3 600.7,307.3 600.7,613.4 591.5,613.4 591.5,515.4 449.5,515.4 449.5,613.4 378.9,613.4" fill="none" stroke="#b9b9b9" stroke-width="1.2"/>
<polygon points="388.5,316.4 591.7,316.4 591.7,363.2 388.5,363.2" fill="none" stroke="#e6e6e6" stroke-width="1.1"/>
<line x1="451.5" y1="316.4" x2="451.5" y2="363.2" stroke="#e6e6e6" stroke-width="0.9" />
<line x1="458.6" y1="316.4" x2="458.6" y2="363.2" stroke="#e6e6e6" stroke-width="0.9" />
<line x1="521.6" y1="316.4" x2="521.6" y2="363.2" stroke="#e6e6e6" stroke-width="0.9" />
<line x1="528.7" y1="316.4" x2="528.7" y2="363.2" stroke="#e6e6e6" stroke-width="0.9" />
<line x1="369.6" y1="363.2" x2="610.4" y2="363.2" stroke="#e6e6e6" stroke-width="1.1" />
<polygon points="388.4,372.9 591.7,372.9 591.7,504.8 416.7,504.8 416.7,513 440.5,513 440.5,603.4 388.4,603.4 388.4,513 393,513 393,505.8 388.4,505.8" fill="none" stroke="#b9b9b9" stroke-width="1.1"/>
<polyline points="388.4,383.6 398.7,383.6 398.7,372.9" fill="none" stroke="#e6e6e6" stroke-width="1"/>
<polygon points="459.4,524.9 582.1,524.9 582.1,608.8 459.4,608.8" fill="none" stroke="#b9b9b9" stroke-width="1.1"/>
<polyline points="628.5,340.4 646.5,340.4 646.5,338.5" fill="none" stroke="#e6e6e6" stroke-width="1"/>
<rect x="645.5" y="337.5" width="2.5" height="2.5" fill="#eee"/>
<polyline points="628.5,492.5 646.5,492.5 646.5,490.5" fill="none" stroke="#e6e6e6" stroke-width="1"/>
<rect x="645.5" y="489.5" width="2.5" height="2.5" fill="#eee"/>
<polyline points="390.5,641 390.5,659.5 394.5,659.5" fill="none" stroke="#e6e6e6" stroke-width="1"/>
<polyline points="410.3,637 410.3,656.5 414.5,656.5" fill="none" stroke="#e6e6e6" stroke-width="1"/>
<polyline points="491,637 491,655.5 494.5,655.5" fill="none" stroke="#e6e6e6" stroke-width="1"/>
<circle cx="390.2" cy="266.4" r="6.3" fill="#545454" stroke="#e8e8e8" stroke-width="1"/>
<polyline points="390.2,258.9 399.7,266.4 390.2,273.9" fill="none" stroke="#eee" stroke-width="1"/>
<polygon points="396.2,263.9 399.7,266.4 396.2,268.9" fill="#eee"/>
<line x1="383.7" y1="266.4" x2="396.7" y2="266.4" stroke="#e8e8e8" stroke-width="0.9" />
<text x="390.2" y="264.9" font-size="3" fill="#ccc" text-anchor="middle">2</text>
<text x="390.2" y="270.9" font-size="3" fill="#ccc" text-anchor="middle">A-1</text>
<line x1="390.3" y1="273" x2="390.3" y2="297" stroke="#e6e6e6" stroke-width="1" />
<circle cx="411" cy="262.4" r="6.3" fill="#545454" stroke="#e8e8e8" stroke-width="1"/>
<polyline points="411,254.89999999999998 420.5,262.4 411,269.9" fill="none" stroke="#eee" stroke-width="1"/>
<polygon points="417,259.9 420.5,262.4 417,264.9" fill="#eee"/>
<line x1="404.5" y1="262.4" x2="417.5" y2="262.4" stroke="#e8e8e8" stroke-width="0.9" />
<text x="411" y="260.9" font-size="3" fill="#ccc" text-anchor="middle">2</text>
<text x="411" y="266.9" font-size="3" fill="#ccc" text-anchor="middle">A-1</text>
<line x1="410.5" y1="269" x2="410.5" y2="298" stroke="#e6e6e6" stroke-width="1" />
<circle cx="490.9" cy="252.7" r="6.3" fill="#545454" stroke="#e8e8e8" stroke-width="1"/>
<polyline points="490.9,245.2 500.4,252.7 490.9,260.2" fill="none" stroke="#eee" stroke-width="1"/>
<polygon points="496.9,250.2 500.4,252.7 496.9,255.2" fill="#eee"/>
<line x1="484.4" y1="252.7" x2="497.4" y2="252.7" stroke="#e8e8e8" stroke-width="0.9" />
<text x="490.9" y="251.2" font-size="3" fill="#ccc" text-anchor="middle">2</text>
<text x="490.9" y="257.2" font-size="3" fill="#ccc" text-anchor="middle">A-1</text>
<line x1="491" y1="259.5" x2="491" y2="280.5" stroke="#e6e6e6" stroke-width="1" />
<circle cx="322.4" cy="339.6" r="6.3" fill="#545454" stroke="#e8e8e8" stroke-width="1"/>
<polyline points="314.9,339.6 322.4,331.6 329.9,339.6" fill="none" stroke="#eee" stroke-width="1"/>
<polygon points="319.9,334.1 322.4,331.6 324.9,334.1" fill="#eee"/>
<line x1="315.9" y1="339.6" x2="328.9" y2="339.6" stroke="#e8e8e8" stroke-width="0.9" />
<text x="322.4" y="338.1" font-size="3" fill="#ccc" text-anchor="middle">2</text>
<text x="322.4" y="344.1" font-size="3" fill="#ccc" text-anchor="middle">A-1</text>
<line x1="331" y1="339.6" x2="350.5" y2="339.6" stroke="#e6e6e6" stroke-width="1" />
<circle cx="322.4" cy="492.3" r="6.3" fill="#545454" stroke="#e8e8e8" stroke-width="1"/>
<polyline points="314.9,492.3 322.4,484.3 329.9,492.3" fill="none" stroke="#eee" stroke-width="1"/>
<polygon points="319.9,486.8 322.4,484.3 324.9,486.8" fill="#eee"/>
<line x1="315.9" y1="492.3" x2="328.9" y2="492.3" stroke="#e8e8e8" stroke-width="0.9" />
<text x="322.4" y="490.8" font-size="3" fill="#ccc" text-anchor="middle">2</text>
<text x="322.4" y="496.8" font-size="3" fill="#ccc" text-anchor="middle">A-1</text>
<line x1="331" y1="492.3" x2="350.5" y2="492.3" stroke="#e6e6e6" stroke-width="1" />
<polyline points="655,459.3 686.4,459.3 686.4,379 724.2,379 724.2,388.5 1256.5,388.5 1256.5,379 1279,379" fill="none" stroke="#b9b9b9" stroke-width="1.2"/>
<rect x="886.3" y="425.7" width="400" height="3.2" rx="1.6" fill="#5a4c50" stroke="#b43a44" stroke-width="1.4"/>
<polyline points="655,498.7 723.4,498.7 1026.6,397 1140.5,397" fill="none" stroke="#d8d848" stroke-width="3.6" stroke-linejoin="miter"/>
<polyline points="655,498.7 723.4,498.7 1026.6,397 1140.5,397" fill="none" stroke="#545454" stroke-width="1.4" stroke-linejoin="miter"/>
<polyline points="655,507 723.4,507 936.7,435.5 1279,435.5" fill="none" stroke="#e6e6e6" stroke-width="1.1"/>
<line x1="723.4" y1="507.2" x2="1279" y2="507.2" stroke="#a89a40" stroke-width="1.2" />
<line x1="723.4" y1="510.5" x2="1279" y2="510.5" stroke="#4e5a5c" stroke-width="2.5" />
<line x1="655" y1="516.4" x2="1279" y2="516.4" stroke="#a8a0d8" stroke-width="1.1" />
<polyline points="676,548.2 699.5,548.2 699.5,501" fill="none" stroke="#e6e6e6" stroke-width="1"/>
<polygon points="697.3,509 699.5,500.5 701.7,509" fill="#eee"/>
<text x="652" y="555" font-size="15" fill="#eeeeee" text-anchor="start">0"</text>
<line x1="655" y1="624.7" x2="1279" y2="624.7" stroke="#a4a4b2" stroke-width="1.4" />
<line x1="655" y1="634.2" x2="1279" y2="634.2" stroke="#a89e40" stroke-width="1.1" />
<line x1="1277.5" y1="98" x2="1277.5" y2="686" stroke="#dcdcdc" stroke-width="1" />
<rect x="315.0" y="602.7" width="3.6" height="22" fill="#18b018"/>
<polygon points="312.3,606.7 316.8,595.2 321.3,606.7" fill="#22c422"/>
<rect x="316.8" y="622.9000000000001" width="20" height="3.6" fill="#d81818"/>
<polygon points="335.8,620.2 346.3,624.7 335.8,629.2" fill="#e02020"/>
<circle cx="316.8" cy="624.7" r="4.6" fill="#1a1ad0"/>
<circle cx="315.8" cy="623.7" r="2" fill="#3a3af0"/>
<text x="316.8" y="594.2" font-size="8.5" fill="#2ad02a" text-anchor="middle" font-weight="bold" font-family="Liberation Sans">Y</text>
<text x="351.3" y="627.7" font-size="9" fill="#e82828" text-anchor="middle" font-family="Liberation Sans">x</text>
<text x="316.8" y="640.7" font-size="8" fill="#2424e8" text-anchor="middle" font-weight="bold" font-family="Liberation Sans">Z</text>
<rect x="692.9000000000001" y="602.7" width="3.6" height="22" fill="#18b018"/>
<polygon points="690.2,606.7 694.7,595.2 699.2,606.7" fill="#22c422"/>
<rect x="694.7" y="622.9000000000001" width="20" height="3.6" fill="#d81818"/>
<polygon points="713.7,620.2 724.2,624.7 713.7,629.2" fill="#e02020"/>
<circle cx="694.7" cy="624.7" r="4.6" fill="#1a1ad0"/>
<circle cx="693.7" cy="623.7" r="2" fill="#3a3af0"/>
<text x="694.7" y="594.2" font-size="8.5" fill="#2ad02a" text-anchor="middle" font-weight="bold" font-family="Liberation Sans">Y</text>
<text x="729.2" y="627.7" font-size="9" fill="#e82828" text-anchor="middle" font-family="Liberation Sans">x</text>
<text x="694.7" y="640.7" font-size="8" fill="#2424e8" text-anchor="middle" font-weight="bold" font-family="Liberation Sans">Z</text>
<circle cx="287.7" cy="675" r="6.6" fill="#f2f2f4" stroke="#b8b8c0" stroke-width="0.8"/>
<circle cx="287.7" cy="675" r="4.8" fill="none" stroke="#5a6a90" stroke-width="1.2" stroke-dasharray="1.2 1.3"/>
<rect x="285.9" y="672.8" width="3.6" height="4.4" fill="#e83a4a"/>
<circle cx="665.8" cy="675" r="6.6" fill="#f2f2f4" stroke="#b8b8c0" stroke-width="0.8"/>
<circle cx="665.8" cy="675" r="4.8" fill="none" stroke="#5a6a90" stroke-width="1.2" stroke-dasharray="1.2 1.3"/>
<rect x="664.0" y="672.8" width="3.6" height="4.4" fill="#e83a4a"/>
<rect x="949.5" y="99" width="35" height="17" fill="#e6e8f2" stroke="#cfd2dc" stroke-width="0.5"/>
<text x="955" y="110.5" font-size="9" fill="#505a78" font-family="Liberation Sans">Plan 1</text>
<circle cx="966" cy="100.5" r="1" fill="#e89080"/>
<path d="M1008.5 419.5 V431 L1011 428.5 L1013 432.5 L1014.8 431.6 L1012.8 427.8 L1016 427.8 Z" fill="#f4f4f4" stroke="#222" stroke-width="0.7"/>
<rect x="1256.5" y="103.5" width="7" height="5" fill="#eef2fa" stroke="#5a7ab8" stroke-width="0.9"/><path d="M1256 109 H1264" stroke="#3a5a98" stroke-width="1.2"/>
<path d="M1266.5 103.5 L1273 110 M1273 103.5 L1266.5 110" stroke="#5a7ab8" stroke-width="1.3"/>
</g>
</svg><!--/CAD-->
<!-- COMMAND -->
<div id="cmd" class="a">
  <div class="a" style="left:0;top:0;width:1px;height:18px;background:#c8c8c8"></div>
  <div class="a" style="left:265px;top:0;width:1014px;height:18px;background:#e3ebf6;border-left:1px solid #7d7d7d"></div>
  <div class="a" style="left:4px;top:3px;width:1px;height:12px;background:#999"></div>
  <div class="a" style="left:1238px;top:-9px;width:26px;height:26px;background:#dcdcdc"></div>
  <svg class="a" style="left:1238px;top:-9px" width="26" height="26" viewBox="0 0 26 26"><path d="M6.5 22 L13 5 L19.5 22" fill="none" stroke="#222" stroke-width="1.6"/></svg>
</div>
<!-- STATUS -->
<div id="status" class="a">
  <div class="t" style="left:1px;font-size:7.6px">Press F1 to get Help.</div>
  <div class="t" style="left:602px">Country:</div>
  <div class="t" style="left:637px">USA</div>
  <div class="a" style="left:733px;top:1px;width:1px;height:12px;background:#ddd"></div>
  <div class="t" style="left:735px">Drawing type:</div>
  <div class="t" style="left:789px">Scale definition</div>
  <div class="a" style="left:947px;top:1px;width:1px;height:12px;background:#ddd"></div>
  <div class="t" style="left:949px">Scale:</div>
  <div class="t" style="left:974px;color:#aaa">1/4"</div>
  <div class="t" style="left:993px;color:#aaa;font-size:7.2px">SCALE</div>
  <div class="a" style="left:1017px;top:1px;width:1px;height:12px;background:#ddd"></div>
  <div class="t" style="left:1020px">Length:</div>
  <div class="t" style="left:1052px;color:#aaa">' "</div>
  <div class="a" style="left:1082px;top:1px;width:1px;height:12px;background:#ddd"></div>
  <div class="t" style="left:1085px">Angle:</div>
  <div class="t" style="left:1112px">0.000</div>
  <div class="a" style="left:1142px;top:1px;width:1px;height:12px;background:#ddd"></div>
  <div class="t" style="left:1145px;color:#aaa">deg</div>
  <div class="a" style="left:1175px;top:1px;width:1px;height:12px;background:#ddd"></div>
  <div class="t" style="left:1178px">%:</div>
  <div class="t" style="left:1192px">1</div>
  <div class="a" style="left:1208px;top:1px;width:1px;height:12px;background:#ddd"></div>
  <svg class="a" style="left:1212px;top:2px" width="10" height="11" viewBox="0 0 10 11"><rect x="0.5" y="0.5" width="9" height="8" fill="#fff" stroke="#555"/><path d="M3 8.5 L5 10.5 L7 8.5" fill="#fff" stroke="#555"/><rect x="4.4" y="2" width="1.3" height="4" fill="#c00"/><rect x="4.4" y="6.5" width="1.3" height="1.2" fill="#c00"/></svg>
  <div class="t" style="left:1226px">Notifications</div>
</div>
</div>
<div class="a" style="left:0;top:719px;width:1279px;height:1px;background:#222"></div>
</body></html>
